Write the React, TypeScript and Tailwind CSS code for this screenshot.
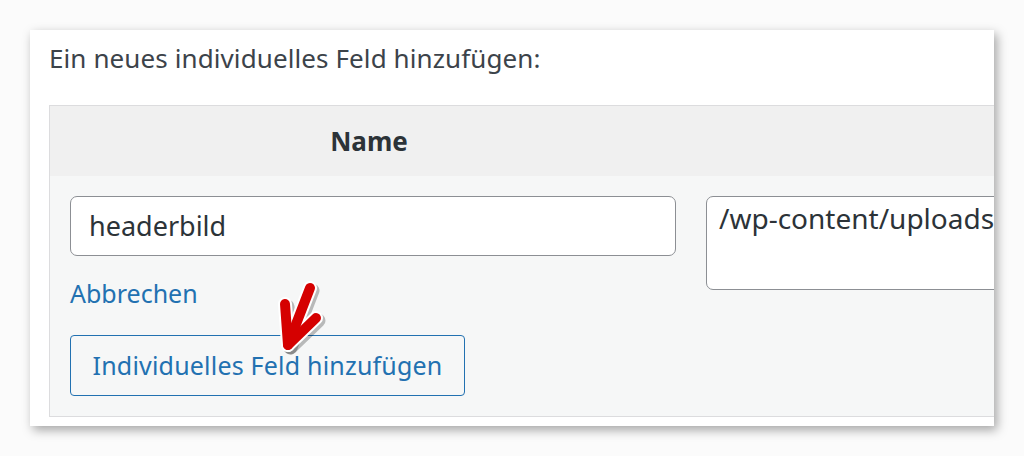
export default function App() {
  return (
    <div className="w-[1024px] h-[456px] bg-[#fbfbfb] overflow-hidden pt-[30px] pl-[30px]" style={{ fontFamily: '"Noto Sans", "Open Sans", sans-serif' }}>
      <div className="relative w-[964px] h-[396px] bg-white overflow-hidden shadow-[3px_4px_10px_rgba(0,0,0,0.35)] pl-[19px] pt-[11px]">
        <h3 className="text-[26px] leading-[34px] text-[#3c434a] tracking-[0.1px]">Ein neues individuelles Feld hinzufügen:</h3>

        {/* table */}
        <div className="mt-[30px] w-[1100px] border border-[#dcdcde]">
          <div className="flex h-[70px] bg-[#f0f0f0] items-center">
            <div className="w-[638px] text-center text-[26px] font-bold text-[#2c3338]">Name</div>
            <div className="flex-1"></div>
          </div>
          <div className="flex bg-[#f6f7f7] h-[240px]">
            <div className="w-[638px] pl-[20px] pt-[20px]">
              <div className="w-[606px] h-[60px] bg-white border border-[#8c8f94] rounded-[7px] flex items-center pl-[18px] text-[27px] text-[#2c3338]">
                headerbild
              </div>
              <div className="mt-[21px] text-[25px] leading-[32px] text-[#2271b1]">Abbrechen</div>
              <button className="mt-[26px] w-[395px] h-[61px] border border-[#2271b1] rounded-[4px] bg-[#f6f7f7] text-[25px] text-[#2271b1] tracking-[0.2px]">
                Individuelles Feld hinzufügen
              </button>
            </div>
            <div className="pl-[18px] pt-[20px]">
              <div className="w-[400px] h-[94px] bg-white border border-[#8c8f94] rounded-[7px] pl-[12px] pt-[5px] text-[28px] leading-[32px] text-[#2c3338] whitespace-nowrap">
                /wp-content/uploads
              </div>
            </div>
          </div>
        </div>

        {/* red arrow */}
        <svg className="absolute left-[240px] top-[250px]" width="60" height="75" viewBox="0 0 60 75" fill="none">
          <g transform="translate(2.5 2.5)" stroke="rgba(0,0,0,0.25)" strokeWidth="14" strokeLinecap="round" strokeLinejoin="round">
            <path d="M15 24 L18 65 L46 38" />
            <path d="M40 8 L18 65" />
          </g>
          <g stroke="#ffffff" strokeWidth="14" strokeLinecap="round" strokeLinejoin="round">
            <path d="M15 24 L18 65 L46 38" />
            <path d="M40 8 L18 65" />
          </g>
          <g stroke="#d50000" strokeWidth="10" strokeLinecap="round" strokeLinejoin="round">
            <path d="M15 24 L18 65 L46 38" />
            <path d="M40 8 L18 65" />
          </g>
        </svg>
      </div>
    </div>
  )
}
